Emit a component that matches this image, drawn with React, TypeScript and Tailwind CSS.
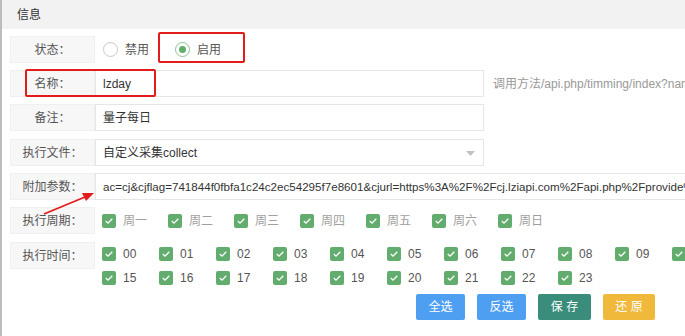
import React from "react";

const font = `font-['Liberation_Sans','Noto_Sans_CJK_SC',sans-serif]`;

function Check() {
  return (
    <span className="w-[14px] h-[14px] rounded-[2px] bg-[#62ad6e] flex items-center justify-center shrink-0">
      <svg width="10" height="10" viewBox="0 0 10 10">
        <polyline points="1.8,5 4,7.2 8.3,2.8" fill="none" stroke="#fff" strokeWidth="1.3" />
      </svg>
    </span>
  );
}

function Label({ children }: { children: React.ReactNode }) {
  return (
    <div className="w-[85px] h-[27px] shrink-0 bg-[#f7f7f7] border border-[#f0f0f0] flex items-center justify-center text-[#555]">
      {children}
    </div>
  );
}

function Input({ children, wide }: { children: React.ReactNode; wide?: boolean }) {
  return (
    <div
      className={`${wide ? "w-[700px] text-[11.6px]" : "w-[389px]"} h-[27px] shrink-0 border border-[#e6e6e6] bg-white flex items-center pl-[7px] text-[#333] whitespace-nowrap overflow-hidden relative`}
    >
      {children}
    </div>
  );
}

export default function App() {
  const weeks = ["周一", "周二", "周三", "周四", "周五", "周六", "周日"];
  const hours = Array.from({ length: 24 }, (_, i) => String(i).padStart(2, "0"));
  return (
    <div className={`relative w-[685px] h-[336px] overflow-hidden bg-white text-[12px] ${font}`}>
      <div className="absolute left-0 top-0 bottom-0 w-[2px] bg-[#bdbdbd]" />
      <div className="h-[29px] bg-[#f2f2f2] flex items-center pl-[17px] text-[#333]">信息</div>
      <div className="pl-[10px] pt-[7px] flex flex-col gap-[7px]">
        {/* 状态 */}
        <div className="flex h-[27px]">
          <Label>状态：</Label>
          <div className="flex items-center pl-[8px] text-[#555]">
            <span className="w-[15px] h-[15px] rounded-full border border-[#c8c8c8]" />
            <span className="ml-[7px] mr-[26px]">禁用</span>
            <span className="w-[15px] h-[15px] rounded-full border border-[#8cc196] flex items-center justify-center">
              <span className="w-[7px] h-[7px] rounded-full bg-[#5fae6c]" />
            </span>
            <span className="ml-[7px]">启用</span>
          </div>
        </div>
        {/* 名称 */}
        <div className="flex h-[27px] items-center">
          <Label>名称：</Label>
          <Input>lzday</Input>
          <span className="ml-[9px] text-[#999] whitespace-nowrap">调用方法/api.php/timming/index?name=lzday</span>
        </div>
        {/* 备注 */}
        <div className="flex h-[27px]">
          <Label>备注：</Label>
          <Input>量子每日</Input>
        </div>
        {/* 执行文件 */}
        <div className="flex h-[27px] mt-[1px]">
          <Label>执行文件：</Label>
          <Input>
            自定义采集collect
            <svg className="absolute right-[8px] top-[11px]" width="9" height="5" viewBox="0 0 9 5">
              <polygon points="0,0 9,0 4.5,5" fill="#c2c2c2" />
            </svg>
          </Input>
        </div>
        {/* 附加参数 */}
        <div className="flex h-[27px]">
          <Label>附加参数：</Label>
          <Input wide>
            ac=cj&amp;cjflag=741844f0fbfa1c24c2ec54295f7e8601&amp;cjurl=https%3A%2F%2Fcj.lziapi.com%2Fapi.php%2Fprovide%2Fvod%2F
          </Input>
        </div>
        {/* 执行周期 */}
        <div className="flex h-[27px]">
          <Label>执行周期：</Label>
          <div className="flex items-center pl-[7px]">
            {weeks.map((w) => (
              <div key={w} className="w-[66px] shrink-0 flex items-center">
                <Check />
                <span className="ml-[7px] text-[#a0a0a0]">{w}</span>
              </div>
            ))}
          </div>
        </div>
        {/* 执行时间 */}
        <div className="flex mt-[1px]">
          <Label>执行时间：</Label>
          <div className="pl-[7px] grid grid-cols-[repeat(15,57px)] auto-rows-[24px]">
            {hours.map((h) => (
              <div key={h} className="flex items-center">
                <Check />
                <span className="ml-[7px] text-[#555]">{h}</span>
              </div>
            ))}
          </div>
        </div>
        <div className="flex gap-[12px] ml-[406px] -mt-[3px] text-white">
          <button className="w-[49px] h-[26px] rounded-[2px] bg-[#4e9ef2]">全选</button>
          <button className="w-[49px] h-[26px] rounded-[2px] bg-[#4e9ef2]">反选</button>
          <button className="w-[53px] h-[26px] rounded-[2px] bg-[#3a8d7a]">保 存</button>
          <button className="w-[52px] h-[26px] rounded-[2px] bg-[#f0b93b]">还 原</button>
        </div>
      </div>

      {/* annotations */}
      <div className="absolute left-[158px] top-[32px] w-[87px] h-[31px] border-2 border-[#e21b1b] rounded-[2px]" />
      <div className="absolute left-[25px] top-[69px] w-[131px] h-[28px] border-2 border-[#e21b1b] rounded-[2px]" />
      <svg className="absolute left-0 top-0" width="120" height="240" viewBox="0 0 120 240">
        <line x1="44" y1="214" x2="85" y2="197" stroke="#e21b1b" strokeWidth="1.8" />
        <polygon points="94,193 82,193 86,201" fill="#e21b1b" />
      </svg>
    </div>
  );
}
